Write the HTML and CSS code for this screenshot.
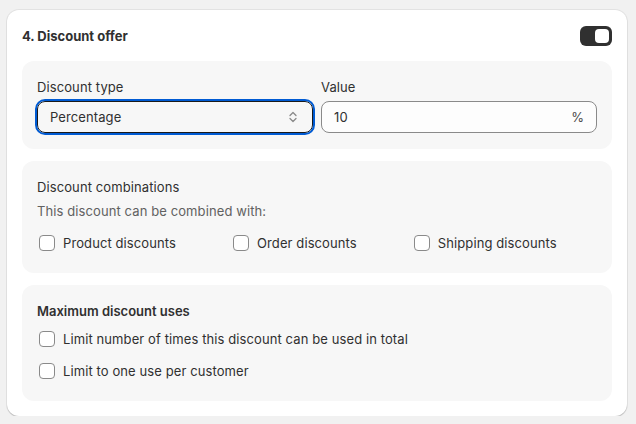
FILE: index.html
```html
<!DOCTYPE html>
<html lang="en">
<head>
<meta charset="utf-8">
<title>Discount offer</title>
<link rel="stylesheet" href="styles.css">
</head>
<body>
<div class="card">
  <div class="card-header">
    <h2 class="title">4. Discount offer</h2>
    <span class="toggle"><span class="knob"></span></span>
  </div>

  <section class="panel">
    <div class="fields">
      <div class="field">
        <label class="label">Discount type</label>
        <div class="select">
          <span>Percentage</span>
          <svg class="chev" width="10" height="16" viewBox="0 0 10 16"><path d="M2 6.5 L5 3.5 L8 6.5" fill="none" stroke="#8a8a8a" stroke-width="1.3" stroke-linecap="round" stroke-linejoin="round"/><path d="M2 9.5 L5 12.5 L8 9.5" fill="none" stroke="#8a8a8a" stroke-width="1.3" stroke-linecap="round" stroke-linejoin="round"/></svg>
        </div>
      </div>
      <div class="field">
        <label class="label">Value</label>
        <div class="input">
          <span>10</span>
          <span class="suffix">%</span>
        </div>
      </div>
    </div>
  </section>

  <section class="panel">
    <div class="text">Discount combinations</div>
    <div class="text muted">This discount can be combined with:</div>
    <div class="checks-row">
      <label class="check"><span class="box"></span>Product discounts</label>
      <label class="check"><span class="box"></span>Order discounts</label>
      <label class="check"><span class="box"></span>Shipping discounts</label>
    </div>
  </section>

  <section class="panel">
    <div class="text strong">Maximum discount uses</div>
    <label class="check row"><span class="box"></span>Limit number of times this discount can be used in total</label>
    <label class="check row"><span class="box"></span>Limit to one use per customer</label>
  </section>
</div>
</body>
</html>
```
FILE: styles.css
```css
* { box-sizing: border-box; }
html, body { margin: 0; background: #f1f1f1; }
body {
  padding: 10px 9px 0 7px;
  font-family: Inter, "Noto Sans", Arial, sans-serif;
  font-size: 13px;
  font-weight: 400;
  letter-spacing: 0.1px;
  line-height: 20px;
  color: #303030;
}
.card {
  width: 620px;
  background: #ffffff;
  border-radius: 12px;
  padding: 16px 15px 15px 15px;
  box-shadow: 0 0 0 1px rgba(0,0,0,0.06), 0 1px 1px rgba(0,0,0,0.18);
  display: flex;
  flex-direction: column;
  gap: 12px;
}
.card-header {
  display: flex;
  justify-content: space-between;
  align-items: center;
  height: 20px;
  margin-bottom: 3px;
}
.title {
  margin: 0;
  font-size: 13px;
  font-weight: 650;
  letter-spacing: 0;
  line-height: 20px;
  color: #303030;
}
.toggle {
  width: 32px;
  height: 20px;
  border-radius: 6px;
  background: #303030;
  display: flex;
  align-items: center;
  justify-content: flex-end;
  padding-right: 3px;
}
.knob {
  width: 14px;
  height: 14px;
  border-radius: 4px;
  background: #ffffff;
}
.panel {
  background: #f7f7f7;
  border-radius: 12px;
  padding: 16px 15px;
  display: flex;
  flex-direction: column;
  gap: 4px;
}
.fields {
  display: grid;
  grid-template-columns: 1fr 1fr;
  gap: 8px;
}
.field { display: flex; flex-direction: column; gap: 4px; }
.label { display: block; }
.select, .input {
  height: 32px;
  border-radius: 8px;
  display: flex;
  align-items: center;
  justify-content: space-between;
  padding: 0 12px;
}
.select {
  background: #f7f7f7;
  border: 1px solid #1a1a1a;
  outline: 2px solid #005bd3;
  outline-offset: 0;
  padding-right: 14px;
}
.input {
  background: #fdfdfd;
  border: 1px solid #8a8a8a;
}
.suffix { color: #4a4a4a; }
.chev { display: block; }
.muted { color: #616161; }
.strong { font-weight: 600; letter-spacing: 0; }
.checks-row {
  display: flex;
  gap: 55px;
  margin-top: 4px;
}
.check {
  display: flex;
  align-items: center;
  gap: 8px;
  height: 28px;
}
.box {
  width: 16px;
  height: 16px;
  margin-left: 2px;
  border: 1px solid #8a8a8a;
  border-radius: 4px;
  background: #ffffff;
}
```
